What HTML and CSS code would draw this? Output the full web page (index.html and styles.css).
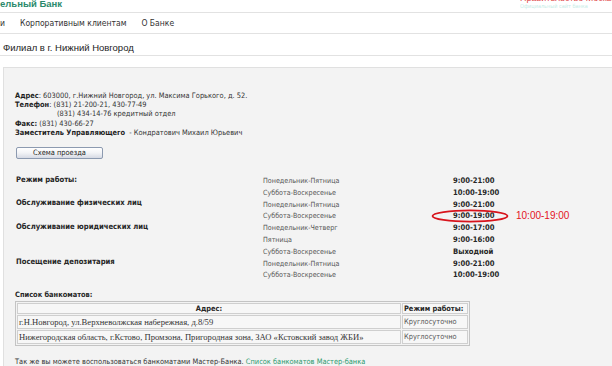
FILE: index.html
```html
<!DOCTYPE html>
<html lang="ru">
<head>
<meta charset="utf-8">
<title>Филиал в г. Нижний Новгород</title>
<link rel="stylesheet" href="styles.css">
</head>
<body>
<header class="top">
  <div class="brand">ельный Банк</div>
  <div class="gov">
    <span class="gov-red">Правительство Москвы</span>
    <span class="gov-sub">Официальный сайт банка</span>
  </div>
</header>
<nav class="nav">
  <span class="nav-item">и</span>
  <span class="nav-item">Корпоративным клиентам</span>
  <span class="nav-item">О Банке</span>
</nav>
<h1 class="title">Филиал в г. Нижний Новгород</h1>
<div class="spacer"></div>
<main class="panel">
  <div class="address">
    <div><b>Адрес</b>: 603000, г.Нижний Новгород, ул. Максима Горького, д. 52.</div>
    <div><b>Телефон</b>: (831) 21-200-21, 430-77-49</div>
    <div class="indent">(831) 434-14-76 кредитный отдел</div>
    <div><b>Факс:</b> (831) 430-66-27</div>
    <div><b>Заместитель Управляющего</b> &nbsp;- Кондратович Михаил Юрьевич</div>
  </div>
  <button class="btn" type="button">Схема проезда</button>

  <div class="sched">
    <div class="lbl">Режим работы:</div><div class="day">Понедельник-Пятница</div><div class="time">9:00-21:00</div>
    <div class="lbl"></div><div class="day">Суббота-Воскресенье</div><div class="time">10:00-19:00</div>
    <div class="lbl">Обслуживание физических лиц</div><div class="day">Понедельник-Пятница</div><div class="time">9:00-21:00</div>
    <div class="lbl"></div><div class="day">Суббота-Воскресенье</div><div class="time marked">9:00-19:00<svg class="ellipse" width="80" height="14" viewBox="0 0 80 14"><ellipse cx="39" cy="7" rx="37.5" ry="5.6" fill="none" stroke="#d8141c" stroke-width="1.8"/></svg><span class="fix">10:00-19:00</span></div>
    <div class="lbl">Обслуживание юридических лиц</div><div class="day">Понедельник-Четверг</div><div class="time">9:00-17:00</div>
    <div class="lbl"></div><div class="day">Пятница</div><div class="time">9:00-16:00</div>
    <div class="lbl"></div><div class="day">Суббота-Воскресенье</div><div class="time">Выходной</div>
    <div class="lbl">Посещение депозитария</div><div class="day">Понедельник-Пятница</div><div class="time">9:00-21:00</div>
    <div class="lbl"></div><div class="day">Суббота-Воскресенье</div><div class="time">10:00-19:00</div>
  </div>

  <div class="atm-title">Список банкоматов:</div>
  <table class="atm">
    <tr><th class="c-addr">Адрес:</th><th class="c-mode">Режим работы:</th></tr>
    <tr><td class="addr">г.Н.Новгород, ул.Верхневолжская набережная, д.8/59</td><td class="mode">Круглосуточно</td></tr>
    <tr><td class="addr">Нижегородская область, г.Кстово, Промзона, Пригородная зона, ЗАО «Кстовский завод ЖБИ»</td><td class="mode">Круглосуточно</td></tr>
  </table>
  <p class="note">Так же вы можете воспользоваться банкоматами Мастер-Банка. <a class="link" href="#">Список банкоматов Мастер-банка</a></p>
</main>
</body>
</html>
```
FILE: styles.css
```css
html, body {
  margin: 0;
  padding: 0;
  background: #ffffff;
  overflow: hidden;
}
body {
  font-family: "DejaVu Sans Condensed", "DejaVu Sans", sans-serif;
  color: #333333;
  width: 612px;
  height: 366px;
}
.top {
  display: flex;
  justify-content: space-between;
  height: 12px;
  border-bottom: 1px solid #e2e2e2;
}
.brand {
  font-family: "Liberation Sans", Arial, sans-serif;
  font-weight: bold;
  font-size: 9.5px;
  line-height: 10px;
  color: #2b8a6c;
  margin-top: -1px;
}
.gov {
  display: flex;
  flex-direction: column;
  width: 92px;
  margin-top: -6px;
  overflow: hidden;
  white-space: nowrap;
}
.gov-red {
  font-family: "Liberation Sans", Arial, sans-serif;
  font-size: 9px;
  line-height: 9px;
  color: #e04848;
}
.gov-sub {
  font-size: 5.5px;
  line-height: 6px;
  color: #c6ece6;
}
.nav {
  display: flex;
  gap: 15px;
  height: 20px;
  align-items: center;
  border-bottom: 1px solid #e2e2e2;
  font-size: 8.5px;
  color: #333333;
}
.title {
  margin: 0;
  height: 22px;
  box-sizing: border-box;
  padding: 8px 0 0 3px;
  font-family: "Liberation Sans", Arial, sans-serif;
  font-weight: normal;
  font-size: 9.5px;
  line-height: 12px;
  color: #222222;
  border-bottom: 1px solid #e2e2e2;
}
.spacer {
  height: 11px;
}
.panel {
  margin: 0 -20px 0 3px;
  background: #f3f3f3;
  border: 1px solid #e0e0e0;
  padding: 23px 0 30px 11px;
  font-size: 7.4px;
  line-height: 9.2px;
}
.address b {
  color: #1e1e1e;
}
.indent {
  padding-left: 42px;
}
.btn {
  display: block;
  margin: 10px 0 0 1px;
  width: 87px;
  height: 12px;
  padding: 0;
  font-family: inherit;
  font-size: 7.4px;
  line-height: 10px;
  color: #222222;
  border: 1px solid #8c9ab0;
  border-radius: 2px;
  background: linear-gradient(#ffffff, #f2f3f6 50%, #d6dae4);
}
.sched {
  display: grid;
  grid-template-columns: 247px 190px 1fr;
  grid-auto-rows: 11.8px;
  margin: 16px 0 0 1px;
  line-height: 11.8px;
}
.lbl {
  font-weight: bold;
  font-size: 7.6px;
  color: #262626;
  margin-top: -1.5px;
}
.day {
  color: #555555;
  font-size: 7.1px;
}
.time {
  font-weight: bold;
  font-size: 7.6px;
  color: #262626;
}
.marked {
  position: relative;
}
.ellipse {
  position: absolute;
  left: -22px;
  top: -1px;
}
.fix {
  position: absolute;
  left: 63px;
  top: 0;
  font-family: "Liberation Sans", Arial, sans-serif;
  font-weight: normal;
  font-size: 10px;
  color: #e3141e;
  white-space: nowrap;
}
.atm-title {
  margin: 9px 0 0 0;
  font-weight: bold;
  color: #262626;
}
.atm {
  margin-top: 2px;
  border: 1px solid #c4c4c4;
  border-spacing: 1px;
  width: 455px;
}
.atm th, .atm td {
  border: 1px solid #cfcfcf;
  background: #f7f7f7;
  padding: 0 1px;
  white-space: nowrap;
}
.atm th {
  height: 9px;
  line-height: 9px;
  font-weight: bold;
  color: #262626;
}
.c-addr {
  text-align: center;
}
.c-mode {
  text-align: left;
  width: 62px;
}
.atm td {
  height: 12px;
  line-height: 12px;
}
.addr {
  font-family: "Liberation Serif", "Times New Roman", serif;
  font-size: 8.6px;
  color: #333333;
}
.mode {
  color: #555555;
}
.note {
  margin: 11px 0 0 0;
  color: #333333;
}
.link {
  color: #2a9a6e;
  text-decoration: none;
}
```
